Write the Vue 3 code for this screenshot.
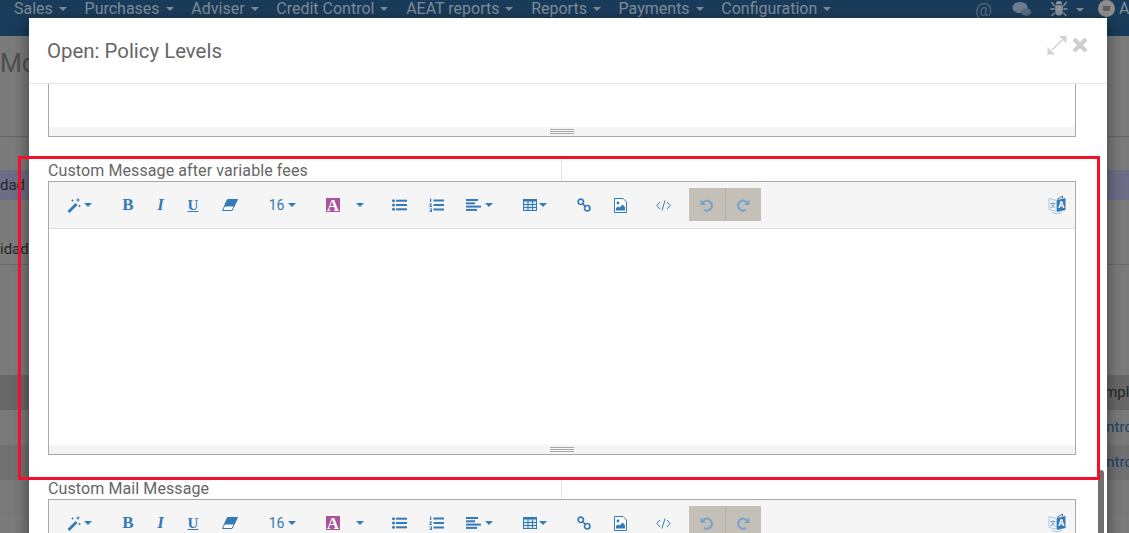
<script setup>
const navItems = ['Sales', 'Purchases', 'Adviser', 'Credit Control', 'AEAT reports', 'Reports', 'Payments', 'Configuration'];

const editors = ['Custom Message after variable fees', 'Custom Mail Message'];

const tools = [
  { id: 'wand', w: 60 },
  { id: 'bold', w: 34, ml: 2, text: 'B' },
  { id: 'italic', w: 31, text: 'I' },
  { id: 'underline', w: 34, text: 'U' },
  { id: 'eraser', w: 40 },
  { id: 'size', w: 65 },
  { id: 'color', w: 36 },
  { id: 'colorcaret', w: 18 },
  { id: 'ul', w: 36, ml: 12 },
  { id: 'ol', w: 38 },
  { id: 'align', w: 49 },
  { id: 'table', w: 62 },
  { id: 'link', w: 36 },
  { id: 'image', w: 36 },
  { id: 'code', w: 50 },
];
</script>

<template>
  <div class="page">
    <nav class="navbar">
      <div class="nav-menu">
        <span v-for="item in navItems" :key="item" class="nav-item">{{ item }}<i class="nav-caret"></i></span>
      </div>
      <div class="nav-right">
        <span class="nav-at">@</span>
        <svg class="nav-chat" width="20" height="16" viewBox="0 0 20 16">
          <ellipse cx="8" cy="6.5" rx="7.5" ry="5.5" fill="#6d7f8f" />
          <ellipse cx="14" cy="11" rx="5" ry="3.8" fill="#566c80" />
        </svg>
        <svg class="nav-bug" width="18" height="17" viewBox="0 0 16 16">
          <path d="M5 4a3 3 0 0 1 6 0zM4.500 5h7v6a3.500 3.500 0 0 1-7 0z" fill="#8a949c" />
          <path d="M1 2l3 4M15 2l-3 4M0 8.500h4M16 8.500h-4M1 15l3-3M15 15l-3-3" stroke="#8a949c" stroke-width="1.300" fill="none" />
        </svg>
        <i class="nav-caret bug-caret"></i>
        <span class="nav-avatar"><i class="nav-camera"></i></span>
        <span class="nav-user">Admin</span>
      </div>
    </nav>

    <div class="backdrop-page">
      <div class="page-head">Mor</div>
      <div class="row row-selected">dad 2</div>
      <div class="row row-plain">idad</div>
      <div class="row row-header"><span class="cell-right">Template</span></div>
      <div class="row row-a"><span class="cell-right link">Control</span></div>
      <div class="row row-b"><span class="cell-right link">Control</span></div>
      <div class="row row-a"></div>
    </div>

    <div class="modal">
      <header class="modal-header">
        <h4 class="modal-title">Open: Policy Levels</h4>
        <div class="modal-actions">
          <svg width="20" height="20" viewBox="0 0 20 20" fill="#d2d2d2">
            <path d="M12 1H19.500V8.500L17 6L14.500 3.500zM8 19.500H0.500V12L3 14.500L5.500 17z" />
            <path d="M15 5L5 15" stroke="#d2d2d2" stroke-width="1.600" />
          </svg>
          <svg width="16" height="16" viewBox="0 0 16 16" fill="#cfcfcf">
            <path d="M3.500 0.500L8 5L12.500 0.500L15.500 3.500L11 8L15.500 12.500L12.500 15.500L8 11L3.500 15.500L0.500 12.500L5 8L0.500 3.500z" />
          </svg>
        </div>
      </header>

      <div class="modal-body">
        <div class="editor editor-clipped">
          <div class="editor-area area-clipped"></div>
          <div class="statusbar"><i class="grip"></i></div>
        </div>

        <section v-for="label in editors" :key="label" class="field">
          <div class="field-label">{{ label }}</div>
          <div class="editor">
            <div class="toolbar">
              <span
                v-for="tool in tools"
                :key="tool.id"
                class="tool"
                :class="'tool-' + tool.id"
                :style="{ width: tool.w + 'px', marginLeft: (tool.ml || 0) + 'px' }"
              >
                <template v-if="tool.text">{{ tool.text }}</template>

                <template v-else-if="tool.id === 'wand'">
                  <svg width="14" height="15" viewBox="0 0 14 15" fill="#337ab7">
                    <path d="M0.500 13L8.500 5L10.500 7L2.500 15z" />
                    <path d="M4.500 2.500h2M5.500 1.500v2M11 0.300v3.400M9.300 2h3.400M11.500 8h2M12.500 7v2" stroke="#337ab7" fill="none" />
                  </svg>
                  <i class="caret caret-wand"></i>
                </template>

                <svg v-else-if="tool.id === 'eraser'" width="16" height="12" viewBox="0 0 16 12">
                  <path d="M5.500 0.500H15.500L10 11.500H0.500z" fill="#fff" stroke="#337ab7" />
                  <path d="M5.500 0.500H15.500L12 7.500H2z" fill="#337ab7" />
                </svg>

                <template v-else-if="tool.id === 'size'">16<i class="caret caret-size"></i></template>

                <span v-else-if="tool.id === 'color'" class="color-box">A</span>

                <i v-else-if="tool.id === 'colorcaret'" class="caret"></i>

                <svg v-else-if="tool.id === 'ul'" width="15" height="12" viewBox="0 0 15 12" fill="#337ab7">
                  <circle cx="1.500" cy="1.700" r="1.500" />
                  <circle cx="1.500" cy="6" r="1.500" />
                  <circle cx="1.500" cy="10.300" r="1.500" />
                  <rect x="4" y="0.700" width="11" height="2" />
                  <rect x="4" y="5" width="11" height="2" />
                  <rect x="4" y="9.300" width="11" height="2" />
                </svg>

                <svg v-else-if="tool.id === 'ol'" width="15" height="14" viewBox="0 0 15 14" fill="#337ab7">
                  <path d="M1 0.500H2.200V4H1zM0.300 5.500H3V6.300L1.500 8H3V9H0.300V8.200L1.800 6.500H0.300zM0.300 10.500H3V14H0.300V13.200H2V12.600H0.900V11.900H2V11.300H0.300z" />
                  <rect x="4.500" y="1.500" width="10.500" height="2" />
                  <rect x="4.500" y="6" width="10.500" height="2" />
                  <rect x="4.500" y="10.500" width="10.500" height="2" />
                </svg>

                <template v-else-if="tool.id === 'align'">
                  <svg width="15" height="12" viewBox="0 0 15 12" fill="#337ab7">
                    <rect y="0" width="12" height="2" />
                    <rect y="3.300" width="9" height="2" />
                    <rect y="6.600" width="15" height="2" />
                    <rect y="9.900" width="11" height="2" />
                  </svg>
                  <i class="caret caret-align"></i>
                </template>

                <template v-else-if="tool.id === 'table'">
                  <svg width="14" height="12" viewBox="0 0 14 12" fill="none" stroke="#337ab7">
                    <rect x="0.500" y="0.500" width="13" height="11" fill="#dbe7f2" />
                    <path d="M0.500 1.500H13.500" stroke-width="2" />
                    <path d="M0.500 5.500H13.500M0.500 8.500H13.500M5 2V11.500M9.500 2V11.500" />
                  </svg>
                  <i class="caret caret-near"></i>
                </template>

                <svg v-else-if="tool.id === 'link'" width="14" height="14" viewBox="0 0 14 14" fill="none" stroke="#337ab7" stroke-width="1.700">
                  <circle cx="3.800" cy="3.800" r="2.700" />
                  <circle cx="10.200" cy="10.200" r="2.700" />
                  <path d="M5.500 5.500L8.500 8.500" />
                </svg>

                <svg v-else-if="tool.id === 'image'" width="13" height="15" viewBox="0 0 13 15">
                  <path d="M0.500 0.500H9L12.500 4V14.500H0.500z" fill="#fff" stroke="#337ab7" />
                  <circle cx="4" cy="5" r="1.400" fill="#337ab7" />
                  <path d="M2 12.500V10L4 8.500L5.500 9.500L8.500 6.500L11 9V12.500z" fill="#337ab7" />
                </svg>

                <svg v-else-if="tool.id === 'code'" width="15" height="11" viewBox="0 0 15 11" fill="none" stroke="#337ab7">
                  <path d="M4 2L0.800 5.500L4 9M11 2L14.200 5.500L11 9M9 0.500L6 10.500" />
                </svg>
              </span>

              <div class="history">
                <span class="history-btn">
                  <svg width="14" height="14" viewBox="0 0 14 14" fill="none">
                    <path d="M3 4.500A5 5 0 1 1 4 11.800" stroke="#76a2cc" stroke-width="2.200" />
                    <path d="M0.500 1.500V7H6z" fill="#76a2cc" />
                  </svg>
                </span>
                <span class="history-btn">
                  <svg width="14" height="14" viewBox="0 0 14 14" fill="none">
                    <path d="M11 4.500A5 5 0 1 0 10 11.800" stroke="#76a2cc" stroke-width="2.200" />
                    <path d="M13.500 1.500V7H8z" fill="#76a2cc" />
                  </svg>
                </span>
              </div>

              <span class="translate">
                <svg width="18" height="20" viewBox="0 0 18 20">
                  <path d="M1 3.500L8.500 5.500V16L1 14.500z" fill="#f2f6fa" stroke="#a9c6e0" />
                  <path d="M9 5L17.500 3V15L9 17z" fill="#337ab7" />
                  <path d="M9 4.500L14.500 1V3.500" stroke="#337ab7" fill="none" />
                  <path d="M4 17.500Q9 20 14 17.500" stroke="#a9c6e0" fill="none" />
                  <text x="13.200" y="13" text-anchor="middle" class="translate-a">A</text>
                  <text x="4.800" y="11.500" text-anchor="middle" class="translate-zh">文</text>
                </svg>
              </span>
            </div>
            <div class="editor-area"></div>
            <div class="statusbar"><i class="grip"></i></div>
          </div>
        </section>
      </div>
      <div class="modal-scrollbar"></div>
    </div>

    <div class="highlight"></div>
  </div>
</template>

<style>
html,
body {
  margin: 0;
  overflow: hidden;
}
</style>

<style scoped>
.page {
  position: relative;
  height: 533px;
  width: 1129px;
  overflow: hidden;
  font-family: Roboto, "Liberation Sans", sans-serif;
  background: #7b7b7b;
}

.navbar {
  display: flex;
  height: 36px;
  overflow: hidden;
  background: #1a3c5b;
  color: #7f8c98;
  font-size: 16px;
}

.nav-menu {
  display: flex;
  flex: none;
  box-sizing: border-box;
  width: 975px;
  padding-left: 14px;
  gap: 17.700px;
  line-height: 18px;
}

.nav-item {
  white-space: nowrap;
}

.nav-caret {
  display: inline-block;
  margin-left: 6px;
  vertical-align: 3px;
  border-top: 4px solid #7f8c98;
  border-left: 4px solid transparent;
  border-right: 4px solid transparent;
}

.nav-right {
  display: flex;
  flex: none;
  align-items: flex-start;
}

.nav-at {
  margin-right: 20px;
  font-size: 19px;
  line-height: 19px;
  color: #53697d;
}

.nav-chat {
  margin: 1px 18px 0 0;
}

.bug-caret {
  margin: 8px 14px 0 8px;
}

.nav-avatar {
  display: flex;
  align-items: center;
  justify-content: center;
  width: 17px;
  height: 17px;
  border-radius: 50%;
  background: #8d8d8d;
}

.nav-camera {
  width: 7px;
  height: 5px;
  background: #5f5f5f;
}

.nav-user {
  margin-left: 4px;
  line-height: 18px;
}

.backdrop-page {
  color: #333;
}

.page-head {
  height: 101px;
  box-sizing: border-box;
  padding-top: 14px;
  font-size: 25px;
  line-height: 27px;
  color: #4e4e4e;
  border-bottom: 1px solid #666;
  margin-bottom: 33px;
}

.row {
  display: flex;
  font-size: 15px;
  white-space: nowrap;
  color: #262626;
}

.row-selected {
  height: 30px;
  line-height: 30px;
  background: #6d6d87;
}

.row-plain {
  height: 30px;
  padding-top: 34px;
  line-height: 30px;
  border-bottom: 1px solid #6a6a6a;
  margin-bottom: 110px;
}

.row-header,
.row-a,
.row-b {
  height: 35px;
  line-height: 35px;
}

.row-header {
  background: #686868;
}

.row-a {
  background: #7a7a7a;
}

.row-b {
  background: #717171;
}

.cell-right {
  margin-left: 1088px;
}

.link {
  color: #1a4468;
}

.modal {
  position: absolute;
  top: 18px;
  left: 29px;
  width: 1078px;
  height: 540px;
  display: flex;
  flex-direction: column;
  background: #fff;
  box-shadow: 0 5px 15px rgba(0, 0, 0, 0.5);
}

.modal-header {
  display: flex;
  flex: none;
  justify-content: space-between;
  height: 65px;
  border-bottom: 1px solid #e5e5e5;
}

.modal-title {
  margin: 0;
  padding: 21px 0 0 18px;
  font-size: 20.400px;
  font-weight: 400;
  line-height: 24px;
  color: #666;
}

.modal-actions {
  display: flex;
  align-items: center;
  gap: 5px;
  height: 20px;
  padding: 17px 19px 0 0;
}

.modal-body {
  flex: 1;
  padding: 0 31px 0 19px;
  overflow: hidden;
}

.modal-scrollbar {
  position: absolute;
  top: 452px;
  right: 3px;
  width: 6px;
  height: 70px;
  border-radius: 3px 3px 0 0;
  background: #6f6f6f;
}

.editor {
  border: 1px solid #a9a9a9;
}

.editor-clipped {
  border-top: none;
}

.field {
  margin-top: 22px;
}

.field-label {
  box-sizing: border-box;
  height: 22px;
  padding-top: 1px;
  line-height: 22px;
  border-right: 1px solid #e0e0e0;
  width: 514px;
  font-size: 16px;
  letter-spacing: 0.1px;
  color: #666;
  white-space: nowrap;
}

.toolbar {
  display: flex;
  align-items: center;
  height: 46px;
  background: #f5f5f5;
  border-bottom: 1px solid #ddd;
}

.tool {
  display: flex;
  flex: none;
  align-items: center;
  justify-content: center;
  height: 33px;
  font-size: 14px;
  color: #337ab7;
}

.tool-bold,
.tool-italic,
.tool-underline {
  font-family: "Liberation Serif", serif;
  font-size: 17px;
}

.tool-bold {
  font-weight: 700;
}

.tool-italic {
  font-style: italic;
  font-weight: 700;
}

.tool-underline {
  text-decoration: underline;
  font-weight: 700;
  font-size: 15px;
}

.caret {
  display: inline-block;
  border-top: 4px solid #337ab7;
  border-left: 4px solid transparent;
  border-right: 4px solid transparent;
}

.caret-wand {
  margin-left: 3px;
}

.caret-size {
  margin-left: 4px;
}

.caret-near {
  margin-left: 2px;
}

.caret-align {
  margin-left: 4px;
}

.color-box {
  width: 14px;
  height: 14px;
  overflow: hidden;
  font-family: "Liberation Serif", serif;
  font-size: 17px;
  font-weight: 700;
  line-height: 15px;
  text-align: center;
  color: #fff;
  background: #a9539b;
}

.history {
  display: flex;
  margin: -1px 0 0 1px;
}

.history-btn {
  display: flex;
  align-items: center;
  justify-content: center;
  width: 36px;
  height: 33px;
  background: #c4c0b8;
}

.history-btn + .history-btn {
  box-shadow: inset 1px 0 0 #b3afa8;
}

.translate {
  display: flex;
  margin: 0 9px 0 auto;
}

.translate-a {
  font-family: Roboto, sans-serif;
  font-size: 9px;
  font-weight: 700;
  fill: #fff;
}

.translate-zh {
  font-family: "Noto Sans CJK SC", sans-serif;
  font-size: 6px;
  fill: #337ab7;
}

.editor-area {
  height: 216px;
  background: #fff;
}

.area-clipped {
  height: 43px;
}

.statusbar {
  display: flex;
  justify-content: center;
  align-items: center;
  height: 9px;
  background: #f4f4f4;
}

.grip {
  width: 24px;
  height: 5px;
  border-top: 1px solid #a9a9a9;
  border-bottom: 1px solid #a9a9a9;
  background: linear-gradient(#a9a9a9, #a9a9a9) 0 1px / 100% 1px no-repeat;
  box-sizing: border-box;
}

.highlight {
  position: absolute;
  top: 156px;
  left: 18px;
  width: 1076px;
  height: 318px;
  border: 3px solid #f0102c;
  pointer-events: none;
}
</style>
